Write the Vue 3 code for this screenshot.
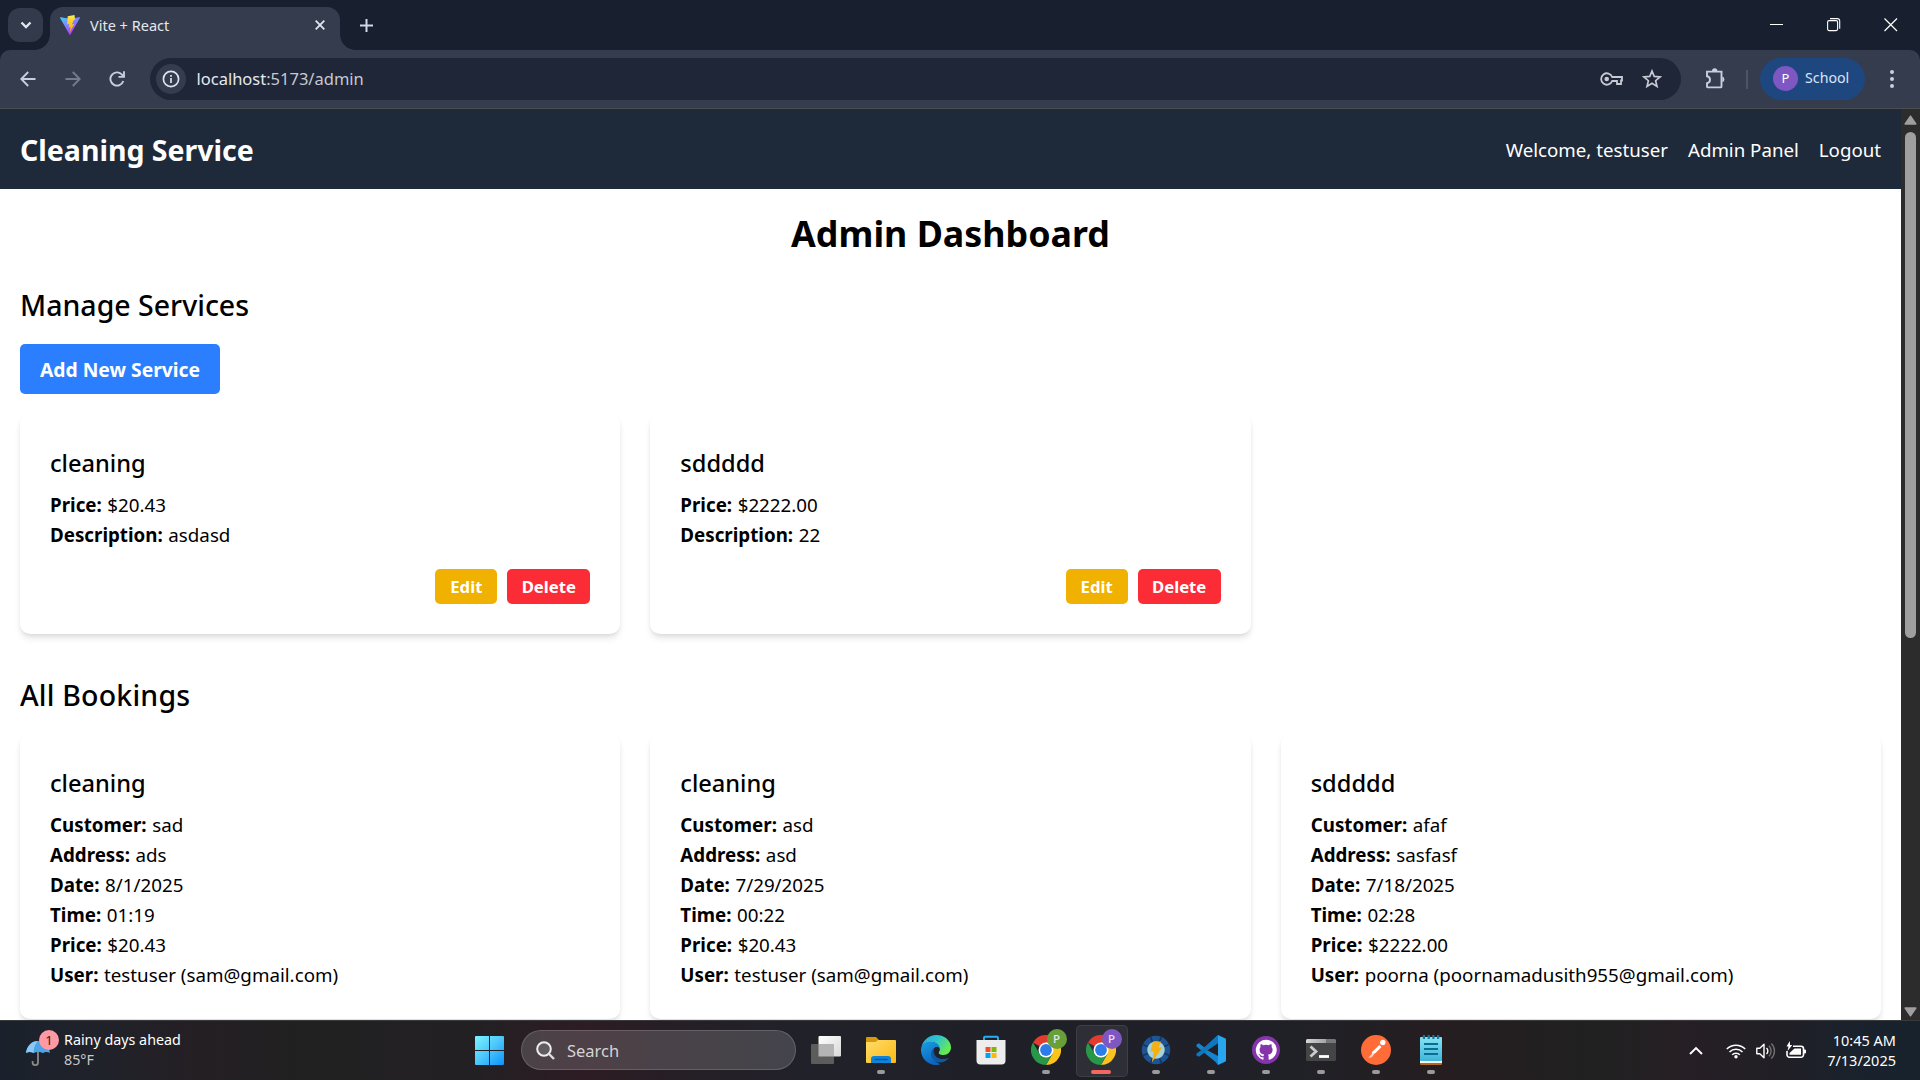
<script setup>
const services = [
  { name: 'cleaning', rows: [['Price', '$20.43'], ['Description', 'asdasd']] },
  { name: 'sddddd', rows: [['Price', '$2222.00'], ['Description', '22']] },
]

const booking = (name, customer, address, date, time, price, user) => ({
  name,
  rows: [['Customer', customer], ['Address', address], ['Date', date], ['Time', time], ['Price', price], ['User', user]],
})

const bookings = [
  booking('cleaning', 'sad', 'ads', '8/1/2025', '01:19', '$20.43', 'testuser (sam@gmail.com)'),
  booking('cleaning', 'asd', 'asd', '7/29/2025', '00:22', '$20.43', 'testuser (sam@gmail.com)'),
  booking('sddddd', 'afaf', 'sasfasf', '7/18/2025', '02:28', '$2222.00', 'poorna (poornamadusith955@gmail.com)'),
]

const spokes = [0, 45, 90, 135, 180, 225, 270, 315]
</script>

<template>
  <div class="screen">
    <header class="tabstrip">
      <button class="tab-search">
        <svg width="12" height="8" viewBox="0 0 12 8"><path d="M1.5 1.5 6 6l4.5-4.5" fill="none" stroke="#e3e6ee" stroke-width="2.3" /></svg>
      </button>
      <div class="tab">
        <svg width="20" height="20" viewBox="0 0 20 20">
          <defs>
            <linearGradient id="vite-a" x1="0" y1="0" x2=".6" y2="1"><stop offset="0" stop-color="#41d1ff" /><stop offset="1" stop-color="#bd34fe" /></linearGradient>
            <linearGradient id="vite-b" x1="0" y1="0" x2="0" y2="1"><stop offset="0" stop-color="#ffea83" /><stop offset=".2" stop-color="#ffdd35" /><stop offset="1" stop-color="#ffa800" /></linearGradient>
          </defs>
          <path d="M19.9 3 10.4 19.6a.5.5 0 0 1-.9 0L.1 3a.5.5 0 0 1 .5-.8l9.4 1.6 9.300-1.6a.5.5 0 0 1 .6.8Z" fill="url(#vite-a)" />
          <path d="M14.500 0 7.700 1.300l-.6 8.100 2.300-.5-.7 3.600 2-.5-1 5 4.700-8-2.500.4 1.800-4.300 1.300-.3Z" fill="url(#vite-b)" />
        </svg>
        <span class="tab-title">Vite + React</span>
        <svg class="tab-close" width="10" height="10" viewBox="0 0 10 10"><path d="m.7.7 8.600 8.600M9.300.7.7 9.300" stroke="#e3e6ee" stroke-width="1.8" /></svg>
      </div>
      <svg class="new-tab" width="13" height="13" viewBox="0 0 13 13"><path d="M6.500 0v13M0 6.500h13" stroke="#d0d7e8" stroke-width="2" /></svg>
      <div class="window-controls">
        <svg width="14" height="14" viewBox="0 0 14 14"><path d="M0 6.500h13" stroke="#fff" /></svg>
        <svg width="14" height="14" viewBox="0 0 14 14" fill="none" stroke="#fff" stroke-width="1.1"><rect x=".6" y="2.600" width="10" height="10" rx="1.500" /><path d="M3 .6h7.500a2.200 2.200 0 0 1 2.200 2.200v8" /></svg>
        <svg width="14" height="14" viewBox="0 0 14 14"><path d="m.5.5 12.500 12.500M13 .5.5 13" stroke="#fff" stroke-width="1.200" /></svg>
      </div>
    </header>

    <div class="toolbar-backdrop">
      <div class="toolbar">
        <div class="nav-icons">
          <svg width="16" height="16" viewBox="0 0 16 16" fill="none" stroke="#c6cee0" stroke-width="1.900"><path d="M15.500 8H2M8.200 1 1.300 8l6.900 7" /></svg>
          <svg width="16" height="16" viewBox="0 0 16 16" fill="none" stroke="#737b8c" stroke-width="1.900"><path d="M.5 8H14M7.800 1l6.900 7-6.900 7" /></svg>
          <svg width="16" height="16" viewBox="0 0 16 16" fill="none" stroke="#c6cee0" stroke-width="1.900"><path d="M14.300 10A6.600 6.600 0 1 1 12.700 3.300l2 2.200M15 .3v5.600H9.500" /></svg>
        </div>
        <div class="omnibox">
          <span class="site-info">
            <svg width="18" height="18" viewBox="0 0 18 18"><circle cx="9" cy="9" r="7.600" fill="none" stroke="#dfe3ee" stroke-width="1.700" /><path d="M9 8v5M9 5v1.800" stroke="#dfe3ee" stroke-width="1.700" /></svg>
          </span>
          <span class="url">localhost<i>:5173/admin</i></span>
          <svg class="key" width="24" height="14" viewBox="0 0 24 14" fill="none" stroke="#c7cad2" stroke-width="1.800"><path d="M12.200 5H22v3.500h-1V12h-4V9h-4.800A5.700 5.700 0 1 1 12.200 5Z" /><circle cx="6.700" cy="7" r="2.300" fill="#c7cad2" stroke="none" /></svg>
          <svg class="star" width="20" height="20" viewBox="0 0 20 20"><path d="m10 2 2.200 5.400 5.900.5-4.500 3.800 1.400 5.700-5-3.100-5 3.100 1.400-5.700L1.900 7.900l5.900-.5Z" fill="none" stroke="#c7cad2" stroke-width="1.700" /></svg>
        </div>
        <svg class="puzzle" width="21" height="21" viewBox="0 0 21 21" fill="none" stroke="#c6cee0" stroke-width="1.900"><path d="M2 3.600h14.500v14.800a1 1 0 0 1-1 1H3a1 1 0 0 1-1-1v-3.200c1.900-.4 3-1.600 3-3.500s-1.100-3-3-3.400Z" /><path d="M7 3a2.700 2.700 0 0 1 5.400 0ZM17.300 8.600a2.900 2.900 0 0 1 0 5.600Z" fill="#c6cee0" stroke="none" /></svg>
        <span class="divider"></span>
        <div class="profile"><b>P</b><span>School</span></div>
        <svg class="dots" width="4" height="18" viewBox="0 0 4 18" fill="#c6cee0"><circle cx="2" cy="2" r="2" /><circle cx="2" cy="9" r="2" /><circle cx="2" cy="16" r="2" /></svg>
      </div>
    </div>

    <div class="viewport">
      <div class="page">
        <nav class="navbar">
          <span class="brand">Cleaning Service</span>
          <div class="links"><span class="welcome">Welcome, testuser</span><a>Admin Panel</a><a>Logout</a></div>
        </nav>
        <main>
          <h1>Admin Dashboard</h1>
          <h2>Manage Services</h2>
          <button class="add">Add New Service</button>
          <section class="grid services">
            <article v-for="s in services" :key="s.name" class="card">
              <h3>{{ s.name }}</h3>
              <p v-for="[k, v] in s.rows" :key="k"><strong>{{ k }}:</strong> {{ v }}</p>
              <div class="actions"><button class="edit">Edit</button><button class="delete">Delete</button></div>
            </article>
          </section>
          <h2 class="bookings-title">All Bookings</h2>
          <section class="grid">
            <article v-for="(b, i) in bookings" :key="i" class="card">
              <h3>{{ b.name }}</h3>
              <p v-for="[k, v] in b.rows" :key="k"><strong>{{ k }}:</strong> {{ v }}</p>
            </article>
          </section>
        </main>
      </div>
      <div class="scrollbar">
        <svg width="13" height="10" viewBox="0 0 13 10"><path d="M6.500 1.200 11.800 9H1.200Z" fill="#9f9f9f" stroke="#9f9f9f" stroke-width="1.500" stroke-linejoin="round" /></svg>
        <span class="thumb"></span>
        <svg class="down" width="13" height="10" viewBox="0 0 13 10"><path d="M6.500 8.800 11.800 1H1.200Z" fill="#9f9f9f" stroke="#9f9f9f" stroke-width="1.500" stroke-linejoin="round" /></svg>
      </div>
    </div>

    <footer class="taskbar">
      <div class="weather">
        <div class="umbrella">
          <svg width="24" height="28" viewBox="0 0 24 28">
            <path d="M12 13v10.500a2.700 2.700 0 0 1-5.400 0V22" fill="none" stroke="#8a8a8a" stroke-width="1.800" />
            <path d="M0 14C1 6.500 6 2 12 2s11 4.500 12 12c-2-1.500-5-1.500-7 0-2.500-1.500-7-1.500-9.500 0-2-1.500-5.500-1.500-7.500 0Z" fill="#4da3e8" />
            <path d="M0 14C1 6.500 6 2 12 2 9 5 7.500 9 7.500 14c-2-1.500-5.500-1.500-7.500 0Z" fill="#8cc8f5" />
          </svg>
          <span class="alert">1</span>
        </div>
        <div class="forecast"><span>Rainy days ahead</span><span class="temp">85°F</span></div>
      </div>

      <div class="start">
        <svg width="29" height="29" viewBox="0 0 29 29">
          <defs><linearGradient id="win" x1="0" y1="0" x2="1" y2="1"><stop offset="0" stop-color="#7cf3ff" /><stop offset=".5" stop-color="#4cc7fb" /><stop offset="1" stop-color="#0a93fb" /></linearGradient></defs>
          <path d="M1 0h13v14H0V1a1 1 0 0 1 1-1ZM15 0h13a1 1 0 0 1 1 1v13H15ZM0 15h14v14H1a1 1 0 0 1-1-1ZM15 15h14v13a1 1 0 0 1-1 1H15Z" fill="url(#win)" />
        </svg>
      </div>
      <div class="search">
        <svg width="19" height="19" viewBox="0 0 19 19"><circle cx="8" cy="8" r="6.800" fill="#777" fill-opacity=".5" stroke="#eee" stroke-width="2" /><path d="m13 13 5 5" stroke="#ddd" stroke-width="2.400" /></svg>
        <span>Search</span>
      </div>

      <div class="apps">
        <div class="app">
          <svg width="30" height="30" viewBox="0 0 30 30">
            <defs><linearGradient id="tv" x1="0" y1="0" x2="1" y2="1"><stop offset="0" stop-color="#fff" /><stop offset="1" stop-color="#d8d8d8" /></linearGradient></defs>
            <rect x="7.500" y="1" width="22.500" height="20.500" rx="1" fill="url(#tv)" /><rect x="0" y="9" width="23" height="20" rx="1" fill="#5c5c5c" /><path d="M7.500 9H23v12.500H7.500Z" fill="#b4b4b4" />
          </svg>
        </div>
        <div class="app running">
          <svg width="30" height="30" viewBox="0 0 30 30">
            <defs><linearGradient id="fold" x1="0" y1="0" x2="1" y2="1"><stop offset="0" stop-color="#ffdc6b" /><stop offset="1" stop-color="#fdb913" /></linearGradient></defs>
            <path d="M0 3a1 1 0 0 1 1-1h9l3 3v4H0Z" fill="#d9980a" /><path d="M0 7h9.500l2.500-2h17a1 1 0 0 1 1 1v21a1 1 0 0 1-1 1H1a1 1 0 0 1-1-1Z" fill="url(#fold)" />
            <path d="M5 28v-4a3 3 0 0 1 3-3h14a3 3 0 0 1 3 3v4Z" fill="#0f83d8" /><path d="M8.500 24.500h13" stroke="#08529a" stroke-width="1.300" />
          </svg>
        </div>
        <div class="app">
          <svg width="30" height="30" viewBox="0 0 30 30">
            <defs>
              <linearGradient id="e1" x1="0" y1="0" x2="1" y2=".5"><stop offset="0" stop-color="#2aa9e0" /><stop offset=".5" stop-color="#2fc2cf" /><stop offset="1" stop-color="#66eb52" /></linearGradient>
              <linearGradient id="e2" x1="0" y1="0" x2=".5" y2="1"><stop offset="0" stop-color="#1b9de2" /><stop offset="1" stop-color="#0b64c0" /></linearGradient>
            </defs>
            <path d="M.5 12C2 5 8 0 15.200 0 24 0 30 6 30 12.500c0 4.500-3.500 7.500-7.500 7.500-3.500 0-5.500-1.500-5-2.500.8-1 1.200-2 1.200-3.300C18.700 10.500 15 7 10 7 5 7 2 9.500.5 12Z" fill="url(#e1)" />
            <path d="M0 14C.5 9.500 5 6.800 10 6.800c5 0 8.600 3.200 8.700 6.700-1-1.200-2.500-1.700-4-1.200-2.700 1-4 4-3 8 1 4.500 4 8 8 9-1.500.5-3 .7-4.700.7C6 30-.5 22.500 0 14Z" fill="url(#e2)" />
            <path d="M12.500 13.500c-3.300 3-3.200 8 .3 11.500 4 4 10.500 3.500 15.200-2.300-5 2.300-10.500 1.800-13-2-1.500-2.300-1.500-5-.5-7.500Z" fill="#0c59a4" />
            <path d="M14.500 12.300c-2.500 2-2.300 5.500 0 8.700 2.500 3 8 3.800 13 1.400l.5-1c-4 1.500-9 .5-10.500-3.500l1.200-3.400c-.7-1.700-2.300-2.700-4.200-2.200Z" fill="#20222a" />
          </svg>
        </div>
        <div class="app">
          <svg width="30" height="30" viewBox="0 0 30 30">
            <path d="M8 7V2.500A1 1 0 0 1 9 1.700h12a1 1 0 0 1 1 .8V7" fill="none" stroke="#22b1ee" stroke-width="1.900" />
            <path d="M.5 5h29v20.500a4 4 0 0 1-4 4h-21a4 4 0 0 1-4-4Z" fill="#ededed" />
            <path d="M9.500 12h5v5h-5Z" fill="#f25022" /><path d="M15.500 12h5v5h-5Z" fill="#7fba00" /><path d="M9.500 18h5v5h-5Z" fill="#00a4ef" /><path d="M15.500 18h5v5h-5Z" fill="#ffb900" />
          </svg>
        </div>
        <div v-for="(c, i) in ['green', 'purple']" :key="c" class="app running" :class="{ active: i === 1 }">
          <svg width="30" height="30" viewBox="0 0 30 30">
            <path d="M15 15 2 7.500A15 15 0 0 1 28 7.500L15 8Z" fill="#e33b2e" />
            <path d="M15 15v-7.500h13A15 15 0 0 1 15 30l6.500-11.300Z" fill="#fcc31e" />
            <path d="M15 15 21.500 18.700 15 30A15 15 0 0 1 2 7.500l6.500 11.300Z" fill="#279847" />
            <circle cx="15" cy="15" r="7.500" fill="#fff" /><circle cx="15" cy="15" r="5.900" fill="#2f7bea" />
          </svg>
          <b class="badge" :class="c">P</b>
        </div>
        <div class="app running">
          <svg width="30" height="30" viewBox="0 0 30 30">
            <circle cx="15" cy="15" r="11.500" fill="#a9d3d8" stroke="#1c5494" stroke-width="5.500" />
            <path v-for="a in spokes" :key="a" d="M15 .5v5.500" stroke="#173557" stroke-width="1.500" :transform="`rotate(${a + 22} 15 15)`" />
            <path d="M12 6.500h8l-2.500 6h3.800l-10.500 15 2-11H9.500Z" fill="#f5b014" />
          </svg>
        </div>
        <div class="app running">
          <svg width="30" height="30" viewBox="0 0 30 30">
            <path d="M22 0 8.500 12.500 3 8.200.5 9.500v2L19 26.500 22 30V21L11 15l11-7Z" fill="#1583cd" /><path d="M.5 18.500v2L3 21.800l7-5.300L22 8V0L5.500 15Z" fill="#1177bd" /><path d="M22 0l7 3.200a1.700 1.700 0 0 1 1 1.500v20.600a1.700 1.700 0 0 1-1 1.500L22 30Z" fill="#29a4ee" />
          </svg>
        </div>
        <div class="app running">
          <svg width="30" height="30" viewBox="0 0 30 30">
            <circle cx="15" cy="15" r="14" fill="#8534ab" />
            <path d="M15 4.800A10.200 10.200 0 0 0 11.800 24.700c.5.1.7-.2.7-.5v-1.900c-2.900.6-3.500-1.200-3.500-1.200-.4-1.200-1.100-1.500-1.100-1.500-.9-.6.1-.6.1-.6 1 .1 1.600 1.100 1.600 1.100.9 1.600 2.400 1.100 3 .9.1-.7.3-1.100.6-1.400-2.300-.3-4.600-1.100-4.600-5 0-1.100.4-2 1-2.700-.1-.3-.4-1.300.1-2.700 0 0 .9-.3 2.800 1a9.700 9.700 0 0 1 5.100 0c2-1.300 2.800-1 2.800-1 .6 1.400.2 2.400.1 2.700.7.700 1.100 1.600 1.100 2.700 0 3.900-2.400 4.700-4.700 5 .4.3.7.9.7 1.900v2.800c0 .3.2.6.7.5A10.200 10.200 0 0 0 15 4.800Z" fill="#fff" />
          </svg>
        </div>
        <div class="app running">
          <svg width="30" height="30" viewBox="0 0 30 30">
            <defs><linearGradient id="term" x1="0" y1="0" x2="1" y2="0"><stop offset="0" stop-color="#d6d6d6" /><stop offset=".65" stop-color="#a6a6a6" /><stop offset=".66" stop-color="#777" /></linearGradient></defs>
            <rect y="4" width="30" height="22" rx="1.500" fill="#444547" /><path d="M0 8V5.500A1.500 1.500 0 0 1 1.500 4h27A1.500 1.500 0 0 1 30 5.500V8Z" fill="url(#term)" />
            <path d="m4.500 11.500 5.500 5-5.500 5" fill="none" stroke="#ccc" stroke-width="2.800" /><path d="M13 21.500h10" stroke="#fff" stroke-width="2.800" />
          </svg>
        </div>
        <div class="app running">
          <svg width="30" height="30" viewBox="0 0 30 30">
            <circle cx="15" cy="15" r="15" fill="#ff6c37" /><circle cx="21.800" cy="7.500" r="2.700" fill="#fff" /><path d="m18.300 10 2.200 2-6.500 6.500-2.800.5-.3-1.700Z" fill="#fff" /><path d="m11 18.500-3.800 4.500 3.500-.8 2.500-3" fill="#ffd6c6" />
          </svg>
        </div>
        <div class="app running">
          <svg width="30" height="30" viewBox="0 0 30 30">
            <defs><linearGradient id="note" x1="0" y1="0" x2="0" y2="1"><stop offset="0" stop-color="#86e3f4" /><stop offset="1" stop-color="#3fb4d8" /></linearGradient></defs>
            <path d="M4 26h22v3a1 1 0 0 1-1 1H5a1 1 0 0 1-1-1Z" fill="#b5651d" /><path d="M4 24h22v4H4Z" fill="#f1f1f1" /><rect x="4" y="2" width="22" height="24" rx="1" fill="url(#note)" />
            <path d="M8 0v4M12.700 0v4M17.400 0v4M22.100 0v4" stroke="#15799f" stroke-width="2.200" /><path d="M8 9h14M8 14h14M8 19h14" stroke="#0b6d92" stroke-width="1.900" />
          </svg>
        </div>
      </div>

      <div class="tray">
        <svg width="14" height="9" viewBox="0 0 14 9"><path d="m1 8 6-6 6 6" fill="none" stroke="#fff" stroke-width="1.900" /></svg>
        <svg class="wifi" width="20" height="16" viewBox="0 0 20 16" fill="none" stroke="#fff" stroke-width="1.600"><path d="M.8 6a13 13 0 0 1 18.400 0M3.500 9a9.200 9.200 0 0 1 13 0M6.200 11.800a5.400 5.400 0 0 1 7.600 0" /><circle cx="10" cy="13.800" r="1.700" fill="#fff" stroke="none" /></svg>
        <svg class="speaker" width="20" height="18" viewBox="0 0 20 18" fill="none" stroke="#fff" stroke-width="1.400"><path d="M.8 6.200h3l4.200-4v13.600l-4.200-4h-3Z" stroke-linejoin="round" /><path d="M10.500 6a4 4 0 0 1 0 6" /><path d="M13 3.800a7.500 7.500 0 0 1 0 10.400M15.300 1.500a10.500 10.500 0 0 1 0 15" stroke="#707070" /></svg>
        <svg class="battery" width="21" height="18" viewBox="0 0 21 18"><path d="M7 5.200h8a2.500 2.500 0 0 1 2.500 2.500v6a2.500 2.500 0 0 1-2.500 2.500H3.500A2.500 2.500 0 0 1 1 13.700V10" fill="none" stroke="#fff" stroke-width="1.600" /><path d="M8.500 7.500H15v6.300H3.500V12Z" fill="#fff" /><path d="M18 8.500h1a1 1 0 0 1 1 1v2a1 1 0 0 1-1 1h-1ZM3.800 0 .5 5.500h2L1.500 10l4.800-6H4Z" fill="#fff" /></svg>
        <div class="clock"><span>10:45 AM</span><span>7/13/2025</span></div>
      </div>
    </footer>
  </div>
</template>

<style>
body { background: #fff; overflow: hidden; }
</style>

<style scoped>
* { box-sizing: border-box; }
.screen { width: 1920px; height: 1080px; display: flex; flex-direction: column; overflow: hidden; font-family: "Noto Sans", "Open Sans", sans-serif; color: #000; }
svg { display: block; flex: none; }
button { border: 0; margin: 0; padding: 0; font-family: inherit; }

.tabstrip { height: 50px; background: #182030; display: flex; align-items: flex-start; flex: none; }
.tab-search { width: 35px; height: 34px; margin: 8px 7px 0 8px; border-radius: 12px; background: #323a4b; display: flex; align-items: center; justify-content: center; }
.tab { position: relative; width: 290px; height: 43px; margin-top: 7px; padding: 0 15px 7px 10px; border-radius: 13px 13px 0 0; background: #343c4d; display: flex; align-items: center; }
.tab::before, .tab::after { content: ""; position: absolute; bottom: 0; width: 15px; height: 15px; }
.tab::before { left: -15px; background: radial-gradient(circle at 0 0, transparent 14.5px, #343c4d 15px); }
.tab::after { right: -15px; background: radial-gradient(circle at 100% 0, transparent 14.5px, #343c4d 15px); }
.tab-title { margin-left: 10px; font-size: 14.5px; line-height: 20px; color: #e6e8ef; flex: 1; }
.new-tab { margin: 19px 0 0 19.500px; }
.window-controls { display: flex; gap: 43px; margin: 18px 22px 0 auto; }

.toolbar-backdrop { background: #182030; height: 59px; flex: none; }
.toolbar { height: 59px; padding: 8px 26px 8px 20px; background: #343c4d; border-bottom: 1px solid #4b4d50; border-radius: 10px 10px 0 0; display: flex; align-items: center; }
.nav-icons { display: flex; gap: 28.700px; width: 130px; padding-bottom: 1px; }
.omnibox { width: 1531px; height: 42px; border-radius: 21px; background: #1e2637; display: flex; align-items: center; padding: 0 19px 0 6px; }
.site-info { width: 30px; height: 30px; border-radius: 50%; background: #343c4d; display: flex; align-items: center; justify-content: center; }
.url { margin-left: 10.500px; font-size: 16.5px; line-height: 24px; padding-bottom: 0; color: #e6e8ee; flex: 1; }
.url i { font-style: normal; color: #c5c9d2; }
.star { margin-left: 18px; }
.puzzle { margin: 0 0 1px 24.500px; }
.divider { width: 2px; height: 19px; margin-left: 20px; background: #4b5568; }
.profile { width: 105px; height: 42px; margin-left: 12px; border-radius: 21px; background: #1f477f; display: flex; align-items: center; padding: 0 0 1px 13px; color: #d8e4fa; font-size: 14.2px; }
.profile b { width: 25px; height: 25px; margin-right: 7px; border-radius: 50%; background: #7e57c2; color: #fff; font-size: 13px; font-weight: 400; line-height: 25px; text-align: center; }
.profile span { line-height: 20px; padding-bottom: 1px; }
.dots { margin-left: 25px; }

.viewport { display: flex; height: 911px; flex: none; }
.page { width: 1901px; overflow: hidden; background: #fff; }
.navbar { height: 80px; padding: 2px 20px 0; background: #1e2939; color: #fff; display: flex; align-items: center; justify-content: space-between; }
.brand { font-size: 28.500px; font-weight: 700; }
.links { display: flex; gap: 20px; padding-bottom: 2px; font-size: 18.700px; }
main { padding: 20px; }
h1, h2, h3, p { margin: 0; }
h1 { padding-top: 3px; margin-bottom: 30px; font-size: 35.800px; font-weight: 700; line-height: 42px; text-align: center; }
h2 { padding-top: 2px; margin-bottom: 20px; font-size: 28.500px; font-weight: 500; line-height: 38px; }
.bookings-title { letter-spacing: .2px; }
.add { display: block; height: 50px; width: 200px; padding-top: 2px; margin-bottom: 20px; border-radius: 5px; background: #2b7fff; color: #fff; font-size: 19.300px; font-weight: 700; line-height: 48px; white-space: nowrap; }
.grid { display: grid; grid-template-columns: repeat(3, 1fr); gap: 30px; }
.services { margin-bottom: 40px; }
.card { padding: 30px; border-radius: 10px; background: #fff; box-shadow: 0 5px 7.500px -1.250px rgba(0, 0, 0, .1), 0 2.500px 5px -2.500px rgba(0, 0, 0, .1); }
h3 { padding-top: 4px; margin-bottom: 10px; font-size: 23.600px; font-weight: 500; line-height: 31px; }
p { padding-top: 2px; font-size: 18.750px; line-height: 28px; white-space: nowrap; }
strong { margin-right: .7px; }
.actions { display: flex; justify-content: flex-end; gap: 10px; margin-top: 20px; }
.actions button { height: 35px; padding-top: 1px; border-radius: 5px; color: #fff; font-size: 16.700px; font-weight: 700; line-height: 34px; }
.actions .edit { width: 62px; background: #f0b100; }
.actions .delete { width: 83px; background: #fb2c36; }
.scrollbar { width: 19px; background: #2c2c2c; display: flex; flex-direction: column; align-items: center; padding: 6px 0 3px; }
.thumb { width: 11px; height: 506px; margin-top: 7px; border-radius: 6px; background: #9f9f9f; }
.down { margin-top: auto; }

.taskbar { height: 60px; flex: none; display: flex; align-items: center; border-top: 1px solid #3a3a3d; background: linear-gradient(90deg, #1a212c 0, #20222a 100px, #241f23 200px, #212121 310px, #232024 480px, #2d1c23 580px, #251f26 690px, #21212a 800px, #1f2027 1000px, #202127 1300px, #251d20 1440px, #212121 1600px, #261f25 1680px, #211f26 1780px, #1a222c 1850px, #18222d 1920px); color: #fff; }
.weather { display: flex; width: 475px; padding-left: 26px; }
.umbrella { position: relative; width: 24px; padding-top: 7px; }
.alert { position: absolute; left: 13px; top: -2px; width: 20px; height: 20px; border-radius: 50%; background: #ff99a4; color: #222; font-size: 13px; line-height: 20px; text-align: center; }
.forecast { margin: -2px 0 0 14px; display: flex; flex-direction: column; font-size: 14.300px; line-height: 20px; }
.temp { color: #c9c9cb; }
.search { width: 275px; height: 40px; margin: 0 0 1px 17px; padding-left: 14px; border: 1px solid rgba(255, 255, 255, .16); border-radius: 20px; background: rgba(255, 255, 255, .16); display: flex; align-items: center; gap: 12px; color: #d6d3d5; font-size: 16.500px; }
.apps { display: flex; margin-left: 2px; height: 59px; }
.app { position: relative; width: 55px; display: flex; justify-content: center; padding-top: 14px; }
.app.running::after { content: ""; position: absolute; left: 23.500px; top: 49px; width: 8px; height: 4px; border-radius: 2px; background: #9a9a9c; }
.app.active::before { content: ""; position: absolute; left: 2.500px; top: 4px; width: 50px; height: 50px; border: 1px solid rgba(255, 255, 255, .08); border-radius: 5px; background: rgba(255, 255, 255, .07); }
.app.active svg { position: relative; }
.app.active::after { left: 17.500px; width: 20px; background: #f4675f; }
.badge { position: absolute; left: 28.500px; top: 8px; width: 20px; height: 20px; border-radius: 50%; color: #e9e4f3; font-size: 11.500px; font-weight: 500; line-height: 20px; text-align: center; }
.green { background: #689f38; }
.purple { background: #7e57c2; }
.tray { margin-left: auto; padding-right: 24px; display: flex; align-items: center; }
.wifi { margin-left: 23px; }
.speaker { margin-left: 10px; }
.battery { margin: -2px 0 0 10px; }
.clock { width: 89px; margin-top: -2px; display: flex; flex-direction: column; align-items: flex-end; font-size: 14.500px; line-height: 20px; }
</style>
